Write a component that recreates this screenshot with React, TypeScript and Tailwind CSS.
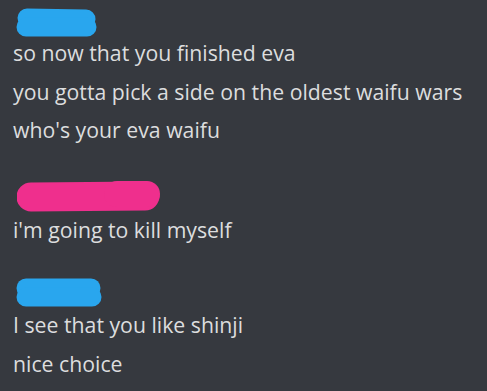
import React from "react";

type Stroke = { x1: number; y1: number; x2: number; y2: number; w: number };

const Blob = ({ width, height, color, strokes }: { width: number; height: number; color: string; strokes: Stroke[] }) => (
    <svg width={width} height={height} viewBox={`0 0 ${width} ${height}`} className="block">
        {strokes.map((s, i) => (
            <line key={i} x1={s.x1} y1={s.y1} x2={s.x2} y2={s.y2} stroke={color} strokeWidth={s.w} strokeLinecap="round" />
        ))}
    </svg>
);

const Line = ({ children }: { children: React.ReactNode }) => (
    <div className="pl-[13px] leading-[38.5px] whitespace-nowrap">{children}</div>
);

export default function App() {
    return (
        <div
            className="w-[487px] h-[391px] overflow-hidden bg-[#36393f] text-[#dcddde] text-[21.25px] flex flex-col"
            style={{ fontFamily: '"Open Sans", "Liberation Sans", sans-serif' }}
        >
            {/* first message group */}
            <div className="pt-[8px] pl-[15px]">
                <Blob
                    width={82}
                    height={29}
                    color="#29a6ee"
                    strokes={[
                        { x1: 12, y1: 10, x2: 71, y2: 11, w: 19 },
                        { x1: 11, y1: 19, x2: 72, y2: 19, w: 19 },
                    ]}
                />
            </div>
            <div className="-mt-[3px]">
                <Line>so now that you finished eva</Line>
                <Line>you gotta pick a side on the oldest waifu wars</Line>
                <Line>who's your eva waifu</Line>
            </div>

            {/* second */}
            <div className="pt-[30.5px] pl-[17px]">
                <Blob
                    width={144}
                    height={32}
                    color="#ef2f8d"
                    strokes={[
                        { x1: 14, y1: 17, x2: 128, y2: 16, w: 29 },
                        { x1: 100, y1: 14, x2: 130, y2: 14, w: 26 },
                    ]}
                />
            </div>
            <div className="-mt-[1px]">
                <Line>i'm going to kill myself</Line>
            </div>

            {/* third */}
            <div className="pt-[28.5px] pl-[15px]">
                <Blob
                    width={87}
                    height={29}
                    color="#29a6ee"
                    strokes={[
                        { x1: 11, y1: 10, x2: 76, y2: 10, w: 19 },
                        { x1: 11, y1: 19, x2: 77, y2: 19, w: 19 },
                    ]}
                />
            </div>
            <div className="-mt-[1px]">
                <Line>I see that you like shinji</Line>
                <Line>nice choice</Line>
            </div>
        </div>
    );
}
